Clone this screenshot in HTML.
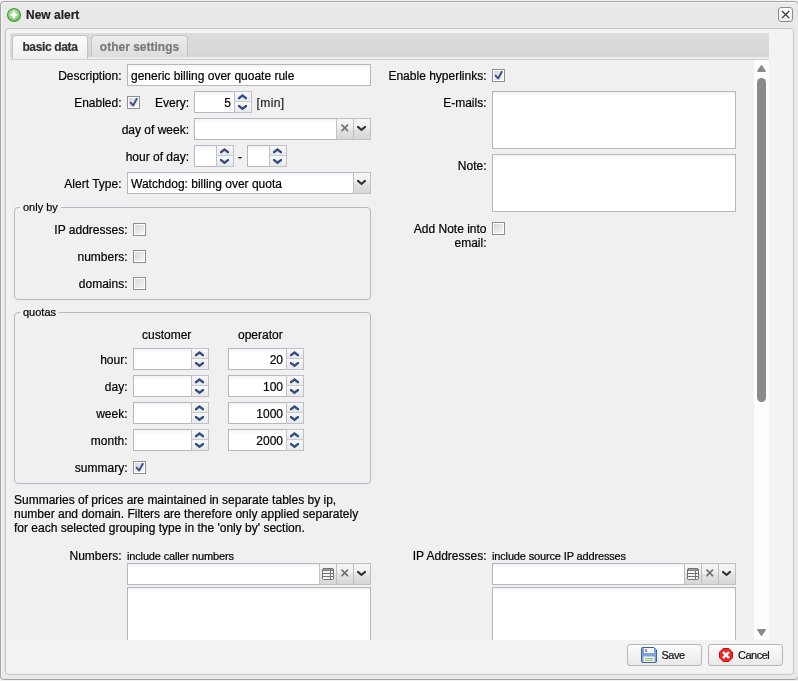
<!DOCTYPE html>
<html><head><meta charset="utf-8">
<style>
*{box-sizing:border-box;margin:0;padding:0}
html,body{-webkit-font-smoothing:antialiased;-webkit-text-stroke:0.2px currentColor;width:798px;height:681px;overflow:hidden;background:#f2f2f2;font-family:"Liberation Sans",sans-serif;font-size:12px;color:#000}
.a{position:absolute}
#win{left:0;top:1px;width:799px;height:679px;border:1px solid #a3a3a3;border-radius:4px;background:#e9e9e9;box-shadow:inset 1px 1px 0 #f7f7f7}
#title{left:26px;top:8px;font-weight:bold;font-size:12px;line-height:14px;color:#222}
#close{left:778px;top:7px;width:15px;height:15px;border:1px solid #8e8e8e;border-radius:3px;background:linear-gradient(#fdfdfd,#ececec)}
#panel{left:5px;top:28px;width:789px;height:647px;border:1px solid #c6c6c6;border-radius:4px;background:#f3f3f3}
#strip{left:10px;top:33px;width:759px;height:27px;background:linear-gradient(#dddddd,#d5d5d5 24px,#ececec 24px,#ececec 26px);border-bottom:1px solid #d0d0d0}
.tab{top:35px;height:22px;border:1px solid #c4c4c4;border-bottom:none;border-radius:4px 4px 0 0;font-weight:bold;font-size:12px;line-height:14px;text-align:center;padding-top:4px;letter-spacing:-0.35px}
#tab1{left:12px;width:76px;height:24px;background:linear-gradient(#fbfbfb,#efefef);color:#333}
#tab2{left:91px;width:97px;height:22px;letter-spacing:0;background:linear-gradient(#ececec,#dddddd);color:#7a7a7a}
#content{left:9px;top:60px;width:760px;height:580px;background:#f0f0f0;overflow:hidden}
#track{left:754px;top:60px;width:15px;height:580px;background:#fdfdfd}
#thumb{left:757px;top:78px;width:9px;height:324px;border-radius:5px;background:#8a8a8a}
.lbl{position:absolute;text-align:right;white-space:nowrap;line-height:14px}
.fld{position:absolute;height:22px;border:1px solid #b6b7c1;background:linear-gradient(#f3f3f3,#fff 4px);line-height:14px;padding:4px 3px 0 3px;white-space:nowrap;overflow:hidden}
.chk{position:absolute;width:13px;height:13px;border:1px solid #8f8f8f;background:#fff}
.chk:after{content:"";position:absolute;left:1px;top:1px;width:9px;height:9px;background:linear-gradient(135deg,#d8d8d8,#f6f6f6)}
.fs{position:absolute;border:1px solid #b8b9c3;border-radius:4px}
.lg{position:absolute;font-size:11px;line-height:13px;background:#f0f0f0;padding:0 3px;white-space:nowrap}
.btn{position:absolute;top:644px;width:75px;height:22px;border:1px solid #b6b6b6;border-radius:3px;background:linear-gradient(#fcfcfc,#e9e9e9)}
.btn span{position:absolute;top:3px;line-height:14px;font-size:11px;letter-spacing:-0.5px;color:#111}
.sp{border:1px solid #bfc0c8;border-radius:0 2px 2px 0;background:#fff}
.sph{background:linear-gradient(#f8f8f8,#e9e9e9)}
.trg{border:1px solid #bfc0c6;background:linear-gradient(#f6f6f6 0,#efefef 40%,#e1e1e1 58%,#d7d7d7 100%)}
</style></head><body><div id="root" style="position:absolute;left:0;top:0;width:798px;height:681px;will-change:transform;">
<div id="win" class="a"></div>
<svg class="a" style="left:6px;top:7px" width="16" height="16" viewBox="0 0 16 16">
 <defs><radialGradient id="gg" cx="0.45" cy="0.4" r="0.6"><stop offset="0" stop-color="#c4eeb4"/><stop offset="0.7" stop-color="#86cf78"/><stop offset="1" stop-color="#62b055"/></radialGradient></defs>
 <circle cx="8" cy="8" r="6.5" fill="url(#gg)" stroke="#4f9848" stroke-width="1.1"/>
 <path d="M8 4.6v6.8M4.6 8h6.8" stroke="#fff" stroke-width="2.3"/>
</svg>
<div id="title" class="a">New alert</div>
<div id="close" class="a"></div>
<svg class="a" style="left:781px;top:10px" width="10" height="10" viewBox="0 0 10 10"><path d="M1 1L8.2 8.2M8.2 1L1 8.2" stroke="#333" stroke-width="1.2"/></svg>

<div id="panel" class="a"></div>
<div id="strip" class="a"></div>
<div id="tab1" class="a tab">basic data</div>
<div id="tab2" class="a tab">other settings</div>
<div id="content" class="a"></div>
<div class="a" style="left:0;top:0;width:754px;height:640px;overflow:hidden">
<div class="lbl" style="right:632.5px;top:69px;font-size:12px;">Description:</div>
<div class="fld " style="left:127px;top:64px;width:244px;height:22px"><span style="position:absolute;left:3px;top:4px">generic billing over quoate rule</span></div>
<div class="lbl" style="right:632.5px;top:96px;font-size:12px;">Enabled:</div>
<div class="chk" style="left:127px;top:96px"></div><svg class="a" style="left:129px;top:97px" width="10" height="10" viewBox="0 0 10 10"><path d="M1.6 5.6L4.1 8.5L7.8 1.8" fill="none" stroke="#3d4b8e" stroke-width="1.9" stroke-linecap="round" stroke-linejoin="round"/></svg>
<div class="lbl" style="right:565px;top:96px;font-size:12px;">Every:</div>
<div class="fld " style="left:194px;top:91px;width:58px;height:22px"><span style="position:absolute;right:20px;top:4px">5</span></div><div class="a sp" style="left:234px;top:91px;width:18px;height:22px"></div><div class="a sph" style="left:235px;top:92px;width:16px;height:9px"></div><div class="a" style="left:235px;top:101px;width:16px;height:1px;background:#cbcbcf"></div><div class="a sph" style="left:235px;top:102px;width:16px;height:10px"></div><svg class="a" style="left:238px;top:94px" width="10" height="6" viewBox="0 0 10 6"><path d="M0 3.5L4.5 0L9 3.5V5.2H7.5L4.5 2.9L1.5 5.2H0Z" fill="#2e4d80"/></svg><svg class="a" style="left:238px;top:105px" width="10" height="6" viewBox="0 0 10 6"><path d="M0 1.7L4.5 5.2L9 1.7V0H7.5L4.5 2.3L1.5 0H0Z" fill="#2e4d80"/></svg>
<div class="lbl" style="left:256.5px;top:96px;text-align:left;font-size:12px;letter-spacing:0.4px;color:#222">[min]</div>
<div class="lbl" style="right:565px;top:123px;font-size:12px;">day of week:</div>
<div class="fld " style="left:194px;top:118px;width:177px;height:22px"></div><div class="a trg" style="left:336px;top:118px;width:18px;height:22px"></div><svg class="a" style="left:341px;top:124px" width="8" height="8" viewBox="0 0 8 8"><path d="M0.5 0.6L7 7.1M7 0.6L0.5 7.1" stroke="#6e6e6e" stroke-width="1.5"/></svg><div class="a trg" style="left:353px;top:118px;width:18px;height:22px"></div><svg class="a" style="left:357px;top:126px" width="10" height="6" viewBox="0 0 10 6"><path d="M0 1.4L4.5 5.2L9 1.4V0H7.4L4.5 2.6L1.6 0H0Z" fill="#333"/></svg>
<div class="lbl" style="right:565px;top:150px;font-size:12px;">hour of day:</div>
<div class="fld " style="left:194px;top:145px;width:40px;height:22px"></div><div class="a sp" style="left:216px;top:145px;width:18px;height:22px"></div><div class="a sph" style="left:217px;top:146px;width:16px;height:9px"></div><div class="a" style="left:217px;top:155px;width:16px;height:1px;background:#cbcbcf"></div><div class="a sph" style="left:217px;top:156px;width:16px;height:10px"></div><svg class="a" style="left:220px;top:148px" width="10" height="6" viewBox="0 0 10 6"><path d="M0 3.5L4.5 0L9 3.5V5.2H7.5L4.5 2.9L1.5 5.2H0Z" fill="#2e4d80"/></svg><svg class="a" style="left:220px;top:159px" width="10" height="6" viewBox="0 0 10 6"><path d="M0 1.7L4.5 5.2L9 1.7V0H7.5L4.5 2.3L1.5 0H0Z" fill="#2e4d80"/></svg>
<div class="lbl" style="left:238px;top:150px;text-align:left;font-size:12px;">-</div>
<div class="fld " style="left:247px;top:145px;width:40px;height:22px"></div><div class="a sp" style="left:269px;top:145px;width:18px;height:22px"></div><div class="a sph" style="left:270px;top:146px;width:16px;height:9px"></div><div class="a" style="left:270px;top:155px;width:16px;height:1px;background:#cbcbcf"></div><div class="a sph" style="left:270px;top:156px;width:16px;height:10px"></div><svg class="a" style="left:273px;top:148px" width="10" height="6" viewBox="0 0 10 6"><path d="M0 3.5L4.5 0L9 3.5V5.2H7.5L4.5 2.9L1.5 5.2H0Z" fill="#2e4d80"/></svg><svg class="a" style="left:273px;top:159px" width="10" height="6" viewBox="0 0 10 6"><path d="M0 1.7L4.5 5.2L9 1.7V0H7.5L4.5 2.3L1.5 0H0Z" fill="#2e4d80"/></svg>
<div class="lbl" style="right:632.5px;top:177px;font-size:12px;">Alert Type:</div>
<div class="fld " style="left:127px;top:172px;width:244px;height:22px"><span style="position:absolute;left:3px;top:4px">Watchdog: billing over quota</span></div><div class="a trg" style="left:353px;top:172px;width:18px;height:22px"></div><svg class="a" style="left:357px;top:180px" width="10" height="6" viewBox="0 0 10 6"><path d="M0 1.4L4.5 5.2L9 1.4V0H7.4L4.5 2.6L1.6 0H0Z" fill="#333"/></svg>
<div class="fs" style="left:14px;top:207px;width:357px;height:93px"></div>
<div class="lg" style="left:20px;top:201px">only by</div>
<div class="lbl" style="right:626.5px;top:223px;font-size:12px;">IP addresses:</div>
<div class="chk" style="left:133px;top:223px"></div>
<div class="lbl" style="right:626.5px;top:250px;font-size:12px;">numbers:</div>
<div class="chk" style="left:133px;top:250px"></div>
<div class="lbl" style="right:626.5px;top:277px;font-size:12px;">domains:</div>
<div class="chk" style="left:133px;top:277px"></div>
<div class="fs" style="left:14px;top:312px;width:357px;height:172px"></div>
<div class="lg" style="left:20px;top:306px">quotas</div>
<div class="lbl" style="left:142px;top:328px;text-align:left;font-size:12px;">customer</div>
<div class="lbl" style="left:238px;top:328px;text-align:left;font-size:12px;">operator</div>
<div class="lbl" style="right:626.5px;top:353px;font-size:12px;">hour:</div>
<div class="fld " style="left:133px;top:348px;width:76px;height:22px"></div><div class="a sp" style="left:191px;top:348px;width:18px;height:22px"></div><div class="a sph" style="left:192px;top:349px;width:16px;height:9px"></div><div class="a" style="left:192px;top:358px;width:16px;height:1px;background:#cbcbcf"></div><div class="a sph" style="left:192px;top:359px;width:16px;height:10px"></div><svg class="a" style="left:195px;top:351px" width="10" height="6" viewBox="0 0 10 6"><path d="M0 3.5L4.5 0L9 3.5V5.2H7.5L4.5 2.9L1.5 5.2H0Z" fill="#2e4d80"/></svg><svg class="a" style="left:195px;top:362px" width="10" height="6" viewBox="0 0 10 6"><path d="M0 1.7L4.5 5.2L9 1.7V0H7.5L4.5 2.3L1.5 0H0Z" fill="#2e4d80"/></svg>
<div class="fld " style="left:228px;top:348px;width:76px;height:22px"><span style="position:absolute;right:20px;top:4px">20</span></div><div class="a sp" style="left:286px;top:348px;width:18px;height:22px"></div><div class="a sph" style="left:287px;top:349px;width:16px;height:9px"></div><div class="a" style="left:287px;top:358px;width:16px;height:1px;background:#cbcbcf"></div><div class="a sph" style="left:287px;top:359px;width:16px;height:10px"></div><svg class="a" style="left:290px;top:351px" width="10" height="6" viewBox="0 0 10 6"><path d="M0 3.5L4.5 0L9 3.5V5.2H7.5L4.5 2.9L1.5 5.2H0Z" fill="#2e4d80"/></svg><svg class="a" style="left:290px;top:362px" width="10" height="6" viewBox="0 0 10 6"><path d="M0 1.7L4.5 5.2L9 1.7V0H7.5L4.5 2.3L1.5 0H0Z" fill="#2e4d80"/></svg>
<div class="lbl" style="right:626.5px;top:380px;font-size:12px;">day:</div>
<div class="fld " style="left:133px;top:375px;width:76px;height:22px"></div><div class="a sp" style="left:191px;top:375px;width:18px;height:22px"></div><div class="a sph" style="left:192px;top:376px;width:16px;height:9px"></div><div class="a" style="left:192px;top:385px;width:16px;height:1px;background:#cbcbcf"></div><div class="a sph" style="left:192px;top:386px;width:16px;height:10px"></div><svg class="a" style="left:195px;top:378px" width="10" height="6" viewBox="0 0 10 6"><path d="M0 3.5L4.5 0L9 3.5V5.2H7.5L4.5 2.9L1.5 5.2H0Z" fill="#2e4d80"/></svg><svg class="a" style="left:195px;top:389px" width="10" height="6" viewBox="0 0 10 6"><path d="M0 1.7L4.5 5.2L9 1.7V0H7.5L4.5 2.3L1.5 0H0Z" fill="#2e4d80"/></svg>
<div class="fld " style="left:228px;top:375px;width:76px;height:22px"><span style="position:absolute;right:20px;top:4px">100</span></div><div class="a sp" style="left:286px;top:375px;width:18px;height:22px"></div><div class="a sph" style="left:287px;top:376px;width:16px;height:9px"></div><div class="a" style="left:287px;top:385px;width:16px;height:1px;background:#cbcbcf"></div><div class="a sph" style="left:287px;top:386px;width:16px;height:10px"></div><svg class="a" style="left:290px;top:378px" width="10" height="6" viewBox="0 0 10 6"><path d="M0 3.5L4.5 0L9 3.5V5.2H7.5L4.5 2.9L1.5 5.2H0Z" fill="#2e4d80"/></svg><svg class="a" style="left:290px;top:389px" width="10" height="6" viewBox="0 0 10 6"><path d="M0 1.7L4.5 5.2L9 1.7V0H7.5L4.5 2.3L1.5 0H0Z" fill="#2e4d80"/></svg>
<div class="lbl" style="right:626.5px;top:407px;font-size:12px;">week:</div>
<div class="fld " style="left:133px;top:402px;width:76px;height:22px"></div><div class="a sp" style="left:191px;top:402px;width:18px;height:22px"></div><div class="a sph" style="left:192px;top:403px;width:16px;height:9px"></div><div class="a" style="left:192px;top:412px;width:16px;height:1px;background:#cbcbcf"></div><div class="a sph" style="left:192px;top:413px;width:16px;height:10px"></div><svg class="a" style="left:195px;top:405px" width="10" height="6" viewBox="0 0 10 6"><path d="M0 3.5L4.5 0L9 3.5V5.2H7.5L4.5 2.9L1.5 5.2H0Z" fill="#2e4d80"/></svg><svg class="a" style="left:195px;top:416px" width="10" height="6" viewBox="0 0 10 6"><path d="M0 1.7L4.5 5.2L9 1.7V0H7.5L4.5 2.3L1.5 0H0Z" fill="#2e4d80"/></svg>
<div class="fld " style="left:228px;top:402px;width:76px;height:22px"><span style="position:absolute;right:20px;top:4px">1000</span></div><div class="a sp" style="left:286px;top:402px;width:18px;height:22px"></div><div class="a sph" style="left:287px;top:403px;width:16px;height:9px"></div><div class="a" style="left:287px;top:412px;width:16px;height:1px;background:#cbcbcf"></div><div class="a sph" style="left:287px;top:413px;width:16px;height:10px"></div><svg class="a" style="left:290px;top:405px" width="10" height="6" viewBox="0 0 10 6"><path d="M0 3.5L4.5 0L9 3.5V5.2H7.5L4.5 2.9L1.5 5.2H0Z" fill="#2e4d80"/></svg><svg class="a" style="left:290px;top:416px" width="10" height="6" viewBox="0 0 10 6"><path d="M0 1.7L4.5 5.2L9 1.7V0H7.5L4.5 2.3L1.5 0H0Z" fill="#2e4d80"/></svg>
<div class="lbl" style="right:626.5px;top:434px;font-size:12px;">month:</div>
<div class="fld " style="left:133px;top:429px;width:76px;height:22px"></div><div class="a sp" style="left:191px;top:429px;width:18px;height:22px"></div><div class="a sph" style="left:192px;top:430px;width:16px;height:9px"></div><div class="a" style="left:192px;top:439px;width:16px;height:1px;background:#cbcbcf"></div><div class="a sph" style="left:192px;top:440px;width:16px;height:10px"></div><svg class="a" style="left:195px;top:432px" width="10" height="6" viewBox="0 0 10 6"><path d="M0 3.5L4.5 0L9 3.5V5.2H7.5L4.5 2.9L1.5 5.2H0Z" fill="#2e4d80"/></svg><svg class="a" style="left:195px;top:443px" width="10" height="6" viewBox="0 0 10 6"><path d="M0 1.7L4.5 5.2L9 1.7V0H7.5L4.5 2.3L1.5 0H0Z" fill="#2e4d80"/></svg>
<div class="fld " style="left:228px;top:429px;width:76px;height:22px"><span style="position:absolute;right:20px;top:4px">2000</span></div><div class="a sp" style="left:286px;top:429px;width:18px;height:22px"></div><div class="a sph" style="left:287px;top:430px;width:16px;height:9px"></div><div class="a" style="left:287px;top:439px;width:16px;height:1px;background:#cbcbcf"></div><div class="a sph" style="left:287px;top:440px;width:16px;height:10px"></div><svg class="a" style="left:290px;top:432px" width="10" height="6" viewBox="0 0 10 6"><path d="M0 3.5L4.5 0L9 3.5V5.2H7.5L4.5 2.9L1.5 5.2H0Z" fill="#2e4d80"/></svg><svg class="a" style="left:290px;top:443px" width="10" height="6" viewBox="0 0 10 6"><path d="M0 1.7L4.5 5.2L9 1.7V0H7.5L4.5 2.3L1.5 0H0Z" fill="#2e4d80"/></svg>
<div class="lbl" style="right:626.5px;top:461px;font-size:12px;">summary:</div>
<div class="chk" style="left:133px;top:461px"></div><svg class="a" style="left:135px;top:462px" width="10" height="10" viewBox="0 0 10 10"><path d="M1.6 5.6L4.1 8.5L7.8 1.8" fill="none" stroke="#3d4b8e" stroke-width="1.9" stroke-linecap="round" stroke-linejoin="round"/></svg>
<div class="a" style="left:14px;top:493px;width:360px;line-height:14px;white-space:nowrap">Summaries of prices are maintained in separate tables by ip,<br>number and domain. Filters are therefore only applied separately<br>for each selected grouping type in the 'only by' section.</div>
<div class="lbl" style="right:632.5px;top:549px;font-size:12px;">Numbers:</div>
<div class="lbl" style="left:127px;top:549px;text-align:left;font-size:11px;letter-spacing:-0.15px">include caller numbers</div>
<div class="fld " style="left:127px;top:563px;width:244px;height:22px"></div><div class="a trg" style="left:319px;top:563px;width:18px;height:22px"></div><svg class="a" style="left:322px;top:568px" width="12" height="12" viewBox="0 0 12 12"><rect x="0.5" y="0.5" width="11" height="11" rx="1.5" fill="#737373" stroke="#737373"/><rect x="1.5" y="1.2" width="9" height="1" fill="#a8a8a8"/><path d="M1 3h7v2H1zM9 3h2v2H9zM1 6h7v2H1zM9 6h2v2H9zM1 9h7v2H1zM9 9h2v2H9z" fill="#f6f6f6"/></svg><div class="a trg" style="left:336px;top:563px;width:18px;height:22px"></div><svg class="a" style="left:341px;top:569px" width="8" height="8" viewBox="0 0 8 8"><path d="M0.5 0.6L7 7.1M7 0.6L0.5 7.1" stroke="#6e6e6e" stroke-width="1.5"/></svg><div class="a trg" style="left:353px;top:563px;width:18px;height:22px"></div><svg class="a" style="left:357px;top:571px" width="10" height="6" viewBox="0 0 10 6"><path d="M0 1.4L4.5 5.2L9 1.4V0H7.4L4.5 2.6L1.6 0H0Z" fill="#333"/></svg>
<div class="fld" style="left:127px;top:587px;width:244px;height:80px"></div>
<div class="lbl" style="right:267.5px;top:69px;font-size:12px;">Enable hyperlinks:</div>
<div class="chk" style="left:492px;top:69px"></div><svg class="a" style="left:494px;top:70px" width="10" height="10" viewBox="0 0 10 10"><path d="M1.6 5.6L4.1 8.5L7.8 1.8" fill="none" stroke="#3d4b8e" stroke-width="1.9" stroke-linecap="round" stroke-linejoin="round"/></svg>
<div class="lbl" style="right:267.5px;top:96px;font-size:12px;">E-mails:</div>
<div class="fld" style="left:492px;top:91px;width:244px;height:58px"></div>
<div class="lbl" style="right:267.5px;top:159px;font-size:12px;">Note:</div>
<div class="fld" style="left:492px;top:154px;width:244px;height:58px"></div>
<div class="lbl" style="right:267.5px;top:222px">Add Note into<br>email:</div>
<div class="chk" style="left:492px;top:222px"></div>
<div class="lbl" style="right:267.5px;top:549px;font-size:12px;">IP Addresses:</div>
<div class="lbl" style="left:492px;top:549px;text-align:left;font-size:11px;letter-spacing:-0.15px">include source IP addresses</div>
<div class="fld " style="left:492px;top:563px;width:244px;height:22px"></div><div class="a trg" style="left:684px;top:563px;width:18px;height:22px"></div><svg class="a" style="left:687px;top:568px" width="12" height="12" viewBox="0 0 12 12"><rect x="0.5" y="0.5" width="11" height="11" rx="1.5" fill="#737373" stroke="#737373"/><rect x="1.5" y="1.2" width="9" height="1" fill="#a8a8a8"/><path d="M1 3h7v2H1zM9 3h2v2H9zM1 6h7v2H1zM9 6h2v2H9zM1 9h7v2H1zM9 9h2v2H9z" fill="#f6f6f6"/></svg><div class="a trg" style="left:701px;top:563px;width:18px;height:22px"></div><svg class="a" style="left:706px;top:569px" width="8" height="8" viewBox="0 0 8 8"><path d="M0.5 0.6L7 7.1M7 0.6L0.5 7.1" stroke="#6e6e6e" stroke-width="1.5"/></svg><div class="a trg" style="left:718px;top:563px;width:18px;height:22px"></div><svg class="a" style="left:722px;top:571px" width="10" height="6" viewBox="0 0 10 6"><path d="M0 1.4L4.5 5.2L9 1.4V0H7.4L4.5 2.6L1.6 0H0Z" fill="#333"/></svg>
<div class="fld" style="left:492px;top:587px;width:244px;height:80px"></div>
</div>
<div id="track" class="a"></div>
<svg class="a" style="left:757px;top:65px" width="9" height="7" viewBox="0 0 9 7"><path d="M4.5 0.9L8.1 6.1H0.9Z" fill="#8a8a8a" stroke="#8a8a8a" stroke-width="1.6" stroke-linejoin="round"/></svg>
<div id="thumb" class="a"></div>
<svg class="a" style="left:757px;top:629px" width="9" height="7" viewBox="0 0 9 7"><path d="M0.9 0.9H8.1L4.5 6.1Z" fill="#8a8a8a" stroke="#8a8a8a" stroke-width="1.6" stroke-linejoin="round"/></svg>

<!-- footer buttons -->
<div class="btn" style="left:627px"><span style="left:33.5px">Save</span></div>
<svg class="a" style="left:641px;top:647px" width="16" height="16" viewBox="0 0 16 16">
 <path d="M0.5 1.5Q0.5 0.5 1.5 0.5H13L15.5 3V14.5Q15.5 15.5 14.5 15.5H1.5Q0.5 15.5 0.5 14.5Z" fill="#7ea3d8" stroke="#3f6399"/>
 <rect x="3" y="1" width="10" height="5" fill="#f2f6fc"/>
 <rect x="4.5" y="2" width="1.2" height="3" fill="#3f6399"/>
 <rect x="2.5" y="9.5" width="11" height="5.5" fill="#f4f8f0"/>
 <rect x="4" y="11" width="8" height="1" fill="#8cc070"/>
 <rect x="4" y="12.8" width="8" height="1" fill="#8cc070"/>
</svg>
<div class="btn" style="left:708px"><span style="left:29px">Cancel</span></div>
<svg class="a" style="left:719px;top:648px" width="14" height="14" viewBox="0 0 14 14">
 <path d="M4.2 0.5H9.8L13.5 4.2V9.8L9.8 13.5H4.2L0.5 9.8V4.2Z" fill="#ec2a2a" stroke="#c80d0d"/>
 <path d="M4 4L10 10M10 4L4 10" stroke="#fff" stroke-width="2.4"/>
</svg>
</div></body></html>
